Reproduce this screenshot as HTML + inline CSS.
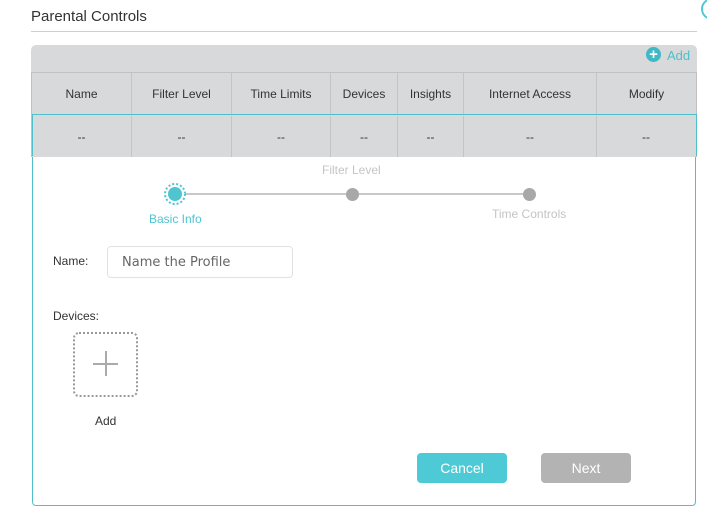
<!DOCTYPE html>
<html><head><style>
body{margin:0;width:707px;height:517px;background:#fff;font-family:"Liberation Sans",sans-serif;position:relative;overflow:hidden;font-size:12px;color:#333}
.a{position:absolute}
.th,.td{position:absolute;text-align:center;color:#333;border-right:1px solid #c2c4c6;box-sizing:border-box}
</style></head><body>
<div class="a" style="left:31px;top:8px;font-size:15px;color:#333">Parental Controls</div>
<div class="a" style="left:31px;top:31px;width:666px;height:1px;background:#cfcfcf"></div>
<div class="a" style="left:701px;top:-2px;width:18px;height:18px;border:2px solid #4ecad6;border-radius:50%"></div>
<div class="a" style="left:31px;top:45px;width:666px;height:112px;background:#d7d9da;border-radius:5px 5px 0 0"></div>
<div class="a" style="left:646px;top:47px;width:15px;height:15px;border-radius:50%;background:#3eb9c5;color:#fff;font-weight:bold;font-size:15px;line-height:15px;text-align:center">+</div>
<div class="a" style="left:667px;top:48px;color:#4ebfca;font-size:13px">Add</div>
<div class="a" style="left:31px;top:72px;width:666px;height:1px;background:#bfc1c3"></div>
<div class="a" style="left:31px;top:72px;width:1px;height:85px;background:#bfc1c3"></div>
<div class="a" style="left:696px;top:72px;width:1px;height:85px;background:#bfc1c3"></div>
<div class="a" style="left:32px;top:114px;width:663px;height:41px;border:1px solid #4ec0cb;border-bottom:0"></div>
<div class="th" style="left:32px;top:73px;width:100px;height:41px;line-height:42px">Name</div>
<div class="th" style="left:132px;top:73px;width:100px;height:41px;line-height:42px">Filter Level</div>
<div class="th" style="left:232px;top:73px;width:99px;height:41px;line-height:42px">Time Limits</div>
<div class="th" style="left:331px;top:73px;width:67px;height:41px;line-height:42px">Devices</div>
<div class="th" style="left:398px;top:73px;width:66px;height:41px;line-height:42px">Insights</div>
<div class="th" style="left:464px;top:73px;width:133px;height:41px;line-height:42px">Internet Access</div>
<div class="th" style="left:597px;top:73px;width:99px;height:41px;line-height:42px;border:0">Modify</div>
<div class="td" style="left:32px;top:116px;width:100px;height:41px;line-height:42px">--</div>
<div class="td" style="left:132px;top:116px;width:100px;height:41px;line-height:42px">--</div>
<div class="td" style="left:232px;top:116px;width:99px;height:41px;line-height:42px">--</div>
<div class="td" style="left:331px;top:116px;width:67px;height:41px;line-height:42px">--</div>
<div class="td" style="left:398px;top:116px;width:66px;height:41px;line-height:42px">--</div>
<div class="td" style="left:464px;top:116px;width:133px;height:41px;line-height:42px">--</div>
<div class="td" style="left:597px;top:116px;width:98px;height:41px;line-height:42px;border:0">--</div>
<div class="a" style="left:32px;top:157px;width:662px;height:348px;border:1px solid #4ec0cb;border-top:0;border-radius:0 0 4px 4px"></div>
<div class="a" style="left:322px;top:163px;color:#c4c4c4">Filter Level</div>
<div class="a" style="left:176px;top:193px;width:354px;height:2px;background:#c8c8c8"></div>
<svg class="a" style="left:163px;top:182px" width="24" height="24"><circle cx="12" cy="12" r="10" fill="#fff" stroke="#4ec5d0" stroke-width="2" stroke-dasharray="2 2"/><circle cx="12" cy="12" r="7" fill="#4ec5d0"/></svg>
<div class="a" style="left:346px;top:188px;width:13px;height:13px;background:#a8a8a8;border-radius:50%"></div>
<div class="a" style="left:523px;top:188px;width:13px;height:13px;background:#a8a8a8;border-radius:50%"></div>
<div class="a" style="left:149px;top:212px;color:#4ec5d0">Basic Info</div>
<div class="a" style="left:492px;top:207px;color:#c4c4c4">Time Controls</div>
<div class="a" style="left:53px;top:254px">Name:</div>
<div class="a" style="left:107px;top:246px;width:184px;height:30px;border:1px solid #e2e2e2;border-radius:4px"></div>
<div class="a" style="left:122px;top:255px;font-family:'DejaVu Sans',sans-serif;font-size:13px;color:#666">Name the Profile</div>
<div class="a" style="left:53px;top:309px">Devices:</div>
<div class="a" style="left:73px;top:332px;width:61px;height:61px;border:2px dotted #999;border-radius:6px"></div>
<div class="a" style="left:93px;top:363px;width:25px;height:2px;background:#aaa"></div>
<div class="a" style="left:105px;top:351px;width:2px;height:25px;background:#aaa"></div>
<div class="a" style="left:95px;top:414px">Add</div>
<div class="a" style="left:417px;top:453px;width:90px;height:30px;background:#4ecad6;border-radius:4px;color:#fff;font-size:14px;text-align:center;line-height:31px">Cancel</div>
<div class="a" style="left:541px;top:453px;width:90px;height:30px;background:#b3b3b3;border-radius:4px;color:#fff;font-size:14px;text-align:center;line-height:31px">Next</div>
</body></html>
